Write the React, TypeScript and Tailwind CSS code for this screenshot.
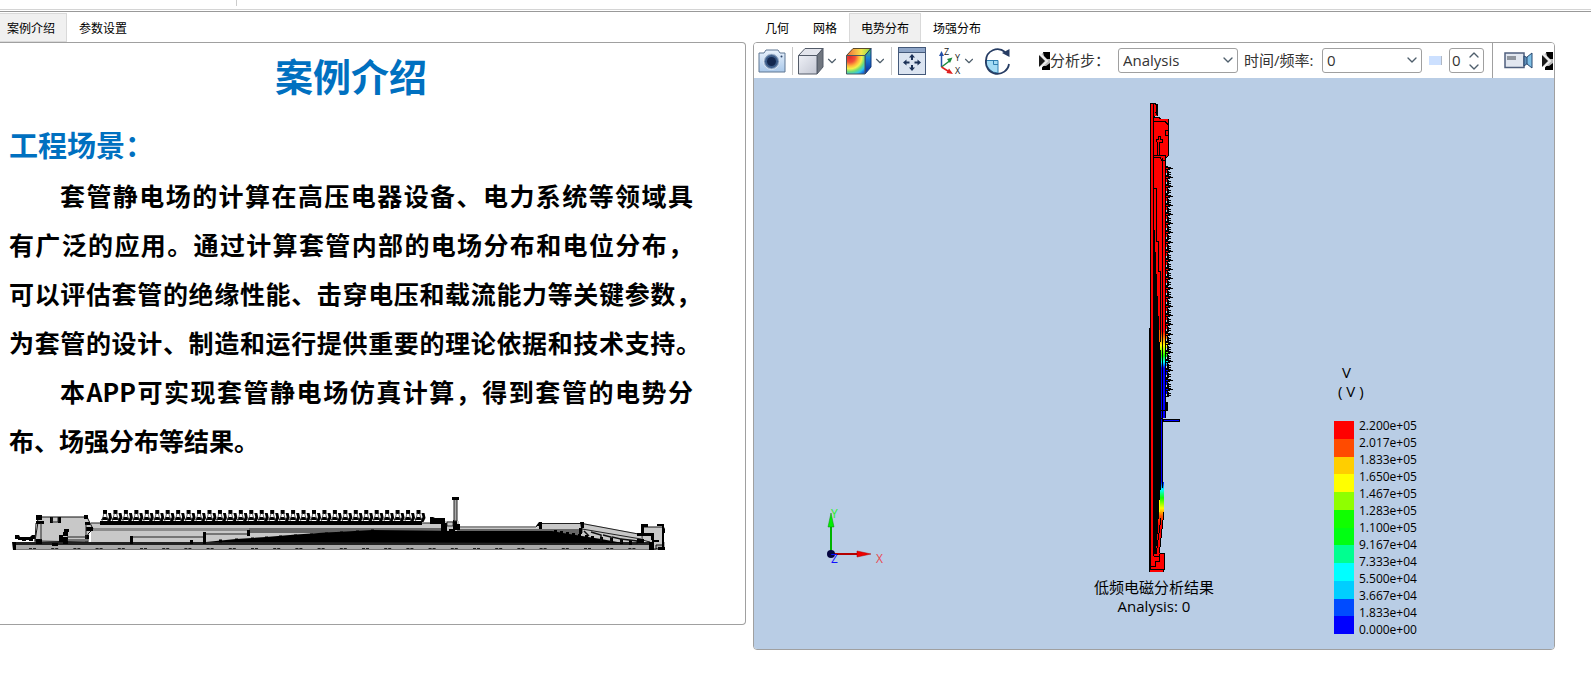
import { useState } from 'react'
import { ChevronDown, ChevronUp } from 'lucide-react'

const leftTabs = ['案例介绍', '参数设置']
const rightTabs = ['几何', '网格', '电势分布', '场强分布']

const legend = [
  { value: '2.200e+05', color: '#ff0000' },
  { value: '2.017e+05', color: '#ff4b00' },
  { value: '1.833e+05', color: '#ffce00' },
  { value: '1.650e+05', color: '#ffff00' },
  { value: '1.467e+05', color: '#8fff00' },
  { value: '1.283e+05', color: '#10ff00' },
  { value: '1.100e+05', color: '#00ff12' },
  { value: '9.167e+04', color: '#00ff90' },
  { value: '7.333e+04', color: '#00ffff' },
  { value: '5.500e+04', color: '#00ceff' },
  { value: '3.667e+04', color: '#004bff' },
  { value: '1.833e+04', color: '#0000ff' },
  { value: '0.000e+00', color: null },
]

function Tabs({ items, active, onChange }: { items: string[], active: string, onChange: (t: string) => void }) {
  return (
    <div role="tablist" className="flex h-[29px]">
      {items.map(item => (
        <button
          key={item}
          role="tab"
          aria-selected={item === active}
          onClick={() => onChange(item)}
          className={`border px-[11px] pt-0.5 text-xs whitespace-nowrap ${item === active ? 'bg-[#f0f0f0] border-[#d9d9d9]' : 'border-transparent'}`}
        >
          {item}
        </button>
      ))}
    </div>
  )
}

function CameraIcon() {
  return (
    <svg width="28" height="26" viewBox="0 0 28 26">
      <defs>
        <linearGradient id="cam" x1="0" y1="0" x2="0" y2="1">
          <stop offset="0" stopColor="#e9f2fc" />
          <stop offset="1" stopColor="#a9c8ea" />
        </linearGradient>
      </defs>
      <path d="M1 5h5l2-3h12l2 3h5v19H1z" fill="url(#cam)" stroke="#5f7693" />
      <circle cx="13.5" cy="13.5" r="8" fill="#7f98b8" stroke="#dfe9f5" />
      <circle cx="13.5" cy="13.5" r="6.5" fill="#3b5b88" />
      <circle cx="13.5" cy="13.5" r="4.5" fill="#14284f" />
      <circle cx="23.5" cy="8.5" r="1" fill="#2b4265" />
    </svg>
  )
}

function CubeIcon() {
  return (
    <svg width="28" height="28" viewBox="0 0 28 28">
      <defs>
        <linearGradient id="cube" x1="0" y1="0" x2="1" y2="1">
          <stop offset="0" stopColor="#eef0f6" />
          <stop offset="1" stopColor="#c3c7d3" />
        </linearGradient>
      </defs>
      <path d="M1.500 8.500L8 1.500H26L20 8.500z" fill="#e3e5ec" stroke="#535b68" />
      <path d="M20 8.500L26 1.500V20L20 27z" fill="#70767f" stroke="#535b68" />
      <path d="M1.500 8.500H20V27H1.500z" fill="url(#cube)" stroke="#535b68" />
    </svg>
  )
}

function ContourCubeIcon() {
  return (
    <svg width="28" height="28" viewBox="0 0 28 28">
      <defs>
        <radialGradient id="contour" gradientUnits="userSpaceOnUse" cx="5" cy="10" r="21">
          <stop offset="0" stopColor="#e02a2a" />
          <stop offset="0.25" stopColor="#f0503a" />
          <stop offset="0.42" stopColor="#ffb43a" />
          <stop offset="0.56" stopColor="#f4f04a" />
          <stop offset="0.7" stopColor="#6fdc78" />
          <stop offset="0.84" stopColor="#2fc4ee" />
          <stop offset="1" stopColor="#1258d8" />
        </radialGradient>
        <linearGradient id="contourTop" x1="0" y1="0" x2="1" y2="0">
          <stop offset="0" stopColor="#f0653a" />
          <stop offset="0.6" stopColor="#f5e64a" />
          <stop offset="1" stopColor="#7fd84a" />
        </linearGradient>
        <linearGradient id="contourSide" x1="0" y1="0" x2="0" y2="1">
          <stop offset="0" stopColor="#5fc840" />
          <stop offset="0.35" stopColor="#1a86d8" />
          <stop offset="1" stopColor="#0a1f9a" />
        </linearGradient>
      </defs>
      <path d="M1.500 8.500L8 1.500H26L20 8.500z" fill="url(#contourTop)" stroke="#5a4a2c" />
      <path d="M20 8.500L26 1.500V20L20 27z" fill="url(#contourSide)" stroke="#123a7a" />
      <path d="M1.500 8.500H20V27H1.500z" fill="url(#contour)" stroke="#4a5a5c" />
    </svg>
  )
}

function FitIcon() {
  return (
    <svg width="28" height="28" viewBox="0 0 28 28">
      <rect x="0.500" y="0.500" width="27" height="27" fill="#dbe4f1" stroke="#44597a" />
      <path d="M1 1h26v4H1z" fill="#8fa6c8" />
      <path d="M1 5.500h26" stroke="#44597a" />
      <g fill="#1c3157">
        <path d="M14 7l-3 3.500h6zM14 24l-3-3.500h6zM5 15.500l3.500-3v6zM23 15.500l-3.500-3v6z" />
        <path d="M13 10h2v3h-2zM13 18h2v3h-2zM8 14.500h3.500v2H8zM16.500 14.500H20v2h-3.500z" />
      </g>
    </svg>
  )
}

function AxesIcon() {
  return (
    <svg width="24" height="30" viewBox="0 0 24 30" className="overflow-visible" fontFamily="Open Sans, sans-serif" fontSize="9" fill="#222">
      <path d="M3.500 21V9" stroke="#2450a8" strokeWidth="1.500" />
      <path d="M1 10l2.500-5L6 10z" fill="#2450a8" />
      <path d="M3.500 21l8-6" stroke="#1d8a3c" strokeWidth="1.500" />
      <path d="M9 13l5.500-1.500L12 17z" fill="#1d8a3c" />
      <path d="M3.500 21l8 5" stroke="#e02020" strokeWidth="1.500" />
      <path d="M11 22.500l4 5.500-6.500-1z" fill="#e02020" />
      <text x="6" y="9">Z</text>
      <text x="17" y="15">Y</text>
      <text x="17" y="28">X</text>
    </svg>
  )
}

function RotateIcon() {
  return (
    <svg width="28" height="28" viewBox="0 0 28 28" fill="none">
      <path d="M2 13.500H14V26A12 12 0 0 1 2 13.500z" fill="#a4dcf5" stroke="#2f7fb0" />
      <path d="M9.500 13.500v4H14" stroke="#2f7fb0" />
      <path d="M21 5A11.500 11.500 0 0 0 2 13.500A11.500 11.500 0 0 0 25 17" stroke="#263c63" strokeWidth="1.800" />
      <path d="M18 6l7.500-4v8z" fill="#263c63" />
    </svg>
  )
}

function MoreIcon() {
  return (
    <svg width="11" height="18" viewBox="0 0 11 18" className="shrink-0">
      <rect width="11" height="18" fill="#bbb" />
      <path d="M0 0h5L0 4z" fill="#fff" />
      <path d="M0 3l6 6-6 6z" fill="#1a1a1a" />
      <path d="M4 0h7v7H8L5 4zM11 11v7H3v-4h4z" fill="#000" />
      <path d="M1 2l7 7-7 7" fill="none" stroke="#eee" strokeWidth="2" />
      <path d="M0 15l3-1v4H0z" fill="#fff" />
    </svg>
  )
}

function VideoIcon() {
  return (
    <svg width="30" height="17" viewBox="0 0 30 17">
      <rect x="1" y="1" width="19" height="14.500" fill="#e2e7f0" stroke="#4f5f7d" strokeWidth="1.500" />
      <rect x="3" y="4" width="9" height="4" fill="#8f959e" />
      <path d="M20 4l4 2v5l-4 3z" fill="#5f8fb8" stroke="#27466e" />
      <path d="M23 5l5-4v15l-5-4z" fill="#7fc0e6" stroke="#27466e" />
    </svg>
  )
}

function Divider() {
  return <span className="h-7 w-px shrink-0 bg-[#c8c8c8]" />
}

// cross-section of the bushing, drawn lying on its side
function BushingSketch() {
  const teeth = Array.from({ length: 31 }, (_, i) => 104 + i * 10.45)
  const dashes = Array.from({ length: 29 }, (_, i) => 28 + i * 22.2)
  return (
    <svg width="660" height="56" viewBox="8 496 660 56" className="max-w-full">
      <path d="M90 524H440V522H458V529H535L539 524H581L640 535V544H90z" fill="#c8c8c8" />
      <path d="M90 529H440V534H248V532H90z" fill="#8c8c8c" />
      <path d="M248 529H440V534H248z" fill="#666" />
      <path d="M456 530H580V537H456z" fill="#686868" />
      <path d="M90 524H440M458 528H535L539 524M539 524.500H581L640 535.500M581 530L640 540M581 524v10" fill="none" stroke="#222" />
      <path d="M12 543H664V551H12z" fill="#aaa" />
      <path d="M12 544.500H650" stroke="#222" strokeWidth="3" />
      <path d="M12 550.500H664" stroke="#777" />
      {dashes.map(x => <path key={x} d={`M${x} 549.500h3m1 0h3`} stroke="#222" />)}
      <path d="M11 543h4v8h-3z" />
      <path d="M14 536h4l1 2h10l2-2h3v4h-2v2h-4v-1h-3v1h-4v-1h-4v-1h-3z" />
      <path d="M34 542L37 523L36 518L86 518L89 524L92 530L87 535V543z" fill="#c8c8c8" stroke="#111" />
      <path d="M35 516h6v5h-6zM49 518h3v6h-3zM57 518h3v6h-3zM83 516h4v4h-4zM35 522h8v3h-8zM35 540h6v5h-6zM58 536h4v7h-4zM63 530h5v3h-5zM62 533h5v4h-5zM62 538h5v7h-5zM84 523h5v3h-5zM85 528h7v4h-7zM84 536h4v4h-4zM51 544h6v3h-6z" />
      <path d="M40 524v17M35 524l-1 19M66 538h18M66 541h18M85 525v18M51 518v5h6v-5" fill="none" stroke="#222" />
      <path d="M131 541v-3H203V535H248V533" fill="none" stroke="#222" />
      <path d="M129 537h3v8h-3zM202 533h3v12h-3zM246 531h3v6h-3zM189 541h3v4h-3z" />
      <path d="M205 543L235 540L265 538L295 535.500L325 533.500L345 532.500L371 531L456 532H551L562 534L581 537L600 540L622 544z" />
      {[218, 234, 250, 264, 278, 293, 309, 324, 339, 355, 370].map((x, i) => (
        <rect key={x} x={x} y={540.500 - i * 1} width="3" height="3" />
      ))}
      {[553, 559, 565, 571, 577, 584, 590, 599, 609, 619, 628].map((x, i) => (
        <rect key={x} x={x} y={531 + i} width="3" height="5" />
      ))}
      <path d="M588 537l-5-5M590 533l10 3v6M602 536l8 2v5M611 538l9 2v4M620 540l16 2v3" fill="none" stroke="#111" strokeWidth="1.500" />
      {/* sheds */}
      <path d="M99 522H421V526H99z" />
      {teeth.map(x => (
        <g key={x}>
          <path d={`M${x - 2} 511h4v4h-4zM${x - 4} 521h7v-2l-2-1h-3zM${x + 3} 514h3l1 5-2 4h-3l2-5z`} />
          <path d={`M${x - 1} 514l-2 8M${x + 1} 514l2 8`} fill="none" stroke="#333" strokeWidth="0.800" />
        </g>
      ))}
      {/* flange */}
      <path d="M429 518h3l2 1h10v6h-15zM440 524h6v9h-6zM452 521h4v4h3v6h-5v3h-6v-4h4z" />
      <path d="M446 523h6v4h-6z" fill="#c8c8c8" stroke="#111" strokeWidth="0.800" />
      <path d="M453 500h3v22h-3z" fill="#aaa" stroke="#222" />
      <path d="M451 498h7v3h-7z" />
      <path d="M535 527l3-4h3v7h-3v-3zM579 523h4v6h-2v6h-3v-6h2z" />
      <path d="M641 528H662V546H655V550H650L649 543L641 541z" fill="#c8c8c8" stroke="#111" />
      <path d="M640 525h7v3h-4v8h-3zM656 525h7v3l1 2v4h-3v-7h-5zM636 534h17v3h-17zM636 540h7v4h-7zM650 536h3v5h-3zM648 543h5v8h-5zM658 543v-2h-7v2zM657 548h7v3h-7zM661 530h2v19h-2z" />
    </svg>
  )
}

// potential distribution on the upright bushing
function PotentialPlot() {
  const sheds = Array.from({ length: 25 }, (_, i) => 168 + i * 9.200)
  return (
    <svg width="64" height="470" viewBox="1122 102 64 470" shapeRendering="crispEdges" className="shrink-0">
      <defs>
        <linearGradient id="potential" gradientUnits="userSpaceOnUse" x1="0" y1="158" x2="0" y2="570">
          <stop offset="0" stopColor="#ff0000" />
          <stop offset="0.420" stopColor="#ff0000" />
          <stop offset="0.435" stopColor="#ff7000" />
          <stop offset="0.455" stopColor="#ffff00" />
          <stop offset="0.480" stopColor="#10ff00" />
          <stop offset="0.495" stopColor="#00ffff" />
          <stop offset="0.510" stopColor="#0000ff" />
          <stop offset="0.785" stopColor="#0000ff" />
          <stop offset="0.805" stopColor="#00ffff" />
          <stop offset="0.825" stopColor="#10ff00" />
          <stop offset="0.850" stopColor="#ffff00" />
          <stop offset="0.870" stopColor="#ff5000" />
          <stop offset="0.890" stopColor="#ff0000" />
          <stop offset="1" stopColor="#ff0000" />
        </linearGradient>
      </defs>
      {sheds.map(y => (
        <g key={y}>
          <path d={`M1165 ${y - 2}h3v7h-3z`} fill="url(#potential)" />
          <path d={`M1166 ${y - 2}h2v1h3v1h2v1h-3v1h-2v1h1v1h2v1h-2v1h2v1h-2v1h-3v-1h1v-2h-2v-1h2v-2h-2v-1h1z`} />
          <path d={`M1166 ${y}h2v1h-2zM1166 ${y + 4}h1v1h-1z`} fill="url(#potential)" />
        </g>
      ))}
      <path d="M1150.500 103.500h3l4 1v11h-3v2h5l1 2h8v36l-3 3v259h-3v67h1v31l-5 45h5v15h-14z" fill="url(#potential)" stroke="#000" />
      <path d="M1151 104h3v12h3v-11M1155 119h13v36h-3v3h-10z" fill="#f00" />
      <path d="M1153.500 104v452M1154 121.500h11l3 3M1157 105v10M1168 130h-3v5h3M1154 155.500h11l1 3M1156 142v-3h2v-3h2v3h2v3h-3v14m-2 0v-14M1154 157.500h6l2 3h3" fill="none" stroke="#000" />
      <path d="M1156 105h2v10h-2v-2h-1v-1h1z" />
      <path d="M1162.500 158V488M1165.500 158v255" fill="none" stroke="#000" />
      <path d="M1154 188.500h2v53h2v30h2v70" fill="none" stroke="#000" />
      <path d="M1153 230h2v22h1v22h1v22h1v20h1v20h1v14h1v140h-1v15h-1v14h-1v15h-1v12h-1v24h-2z" />
      <path d="M1151 104h2v465h-2z" fill="#f00" />
      <path d="M1161 338h1v150h-1zM1163 338h2v80h-2zM1163 482h1v30h-1z" fill="url(#potential)" />
      <path d="M1161 410h5v1h-5zM1161 418h2v1h-2zM1166 402h2v9h-2zM1162 419h3v3h-3z" />
      <path d="M1163 419h17v3h-17z" />
      <path d="M1164 420h15v1h-15z" fill="#00f" />
      <path d="M1159 330h1v12h-1z" fill="#f60" />
      <path d="M1159 500h1v12h-1z" fill="#ff0" />
      <path d="M1158.500 508l-3 46M1161 518l-5 37" fill="none" stroke="#000" />
      <path d="M1154 554h5v-1h5v16h-13v-12h3z" fill="#f00" />
      <path d="M1151 566.500h4v-5h4v-8M1154 556h5M1150.500 103v466.500h14v-16h-5" fill="none" stroke="#000" />
    </svg>
  )
}

function Triad() {
  return (
    <svg width="64" height="62" viewBox="824 504 64 62" className="absolute bottom-[83px] left-[70px] overflow-visible" fontFamily="Open Sans, sans-serif" fontSize="12">
      <path d="M831 554v-28" stroke="#00b400" strokeWidth="2" />
      <path d="M831 513l-3 14h6z" fill="#00f000" stroke="#0a8a0a" strokeWidth="0.500" />
      <path d="M831 554h28" stroke="#b40000" strokeWidth="2" />
      <path d="M871 554l-14-3v6z" fill="#f00000" stroke="#a00" strokeWidth="0.500" />
      <circle cx="831" cy="554" r="4" fill="#050540" />
      <text x="831" y="518" fill="#2cf02c">Y</text>
      <text x="876" y="563" fill="#e84850">X</text>
      <text x="831" y="563" fill="#1010ff">Z</text>
    </svg>
  )
}

function Toolbar() {
  const [frame, setFrame] = useState('0')
  return (
    <div className="flex h-[35px] items-center overflow-hidden bg-white pl-1 text-[15px] text-[#333]">
      <button aria-label="截图"><CameraIcon /></button>
      <span className="ml-1.5 flex"><Divider /></span>
      <button aria-label="显示模式" className="ml-1 flex items-center">
        <CubeIcon />
        <ChevronDown className="size-3.5 shrink-0 text-[#4f5f6c]" />
      </button>
      <button aria-label="云图" className="ml-1.5 flex items-center">
        <ContourCubeIcon />
        <ChevronDown className="size-3.5 shrink-0 text-[#4f5f6c]" />
      </button>
      <span className="ml-1 flex"><Divider /></span>
      <button aria-label="适应窗口" className="ml-1.5"><FitIcon /></button>
      <button aria-label="视图方向" className="ml-3 flex items-center">
        <AxesIcon />
        <ChevronDown className="size-3.5 shrink-0 text-[#4f5f6c]" />
      </button>
      <button aria-label="旋转" className="ml-2"><RotateIcon /></button>
      <span className="ml-[27px]"><MoreIcon /></span>
      <label htmlFor="step" className="w-[68px] shrink-0 whitespace-nowrap">分析步：</label>
      <div className="relative shrink-0">
        <select id="step" className="h-[25px] w-[120px] appearance-none rounded-[3px] border border-[#a0a0a0] bg-white pl-1">
          <option>Analysis</option>
        </select>
        <ChevronDown className="pointer-events-none absolute top-1 right-0.5 size-4 text-[#4f5f6c]" />
      </div>
      <label htmlFor="time" className="ml-1.5 w-[78px] shrink-0 whitespace-nowrap">时间/频率:</label>
      <div className="relative shrink-0">
        <select id="time" className="h-[25px] w-[100px] appearance-none rounded-[3px] border border-[#a0a0a0] bg-white pl-1">
          <option>0</option>
        </select>
        <ChevronDown className="pointer-events-none absolute top-1 right-0.5 size-4 text-[#4f5f6c]" />
      </div>
      <span className="ml-[7px] h-[9px] w-[13px] shrink-0 border-r border-[#b0b8c4] bg-[#cce0ff]" />
      <div className="ml-[7px] flex h-[25px] w-[35px] shrink-0 items-center rounded-[3px] border border-[#a0a0a0]">
        <input aria-label="帧" value={frame} onChange={e => setFrame(e.target.value)} className="w-4 pl-0.5 outline-none" />
        <span className="flex flex-col text-[#4f5f6c]">
          <button aria-label="增加" onClick={() => setFrame(f => String(Number(f) + 1))} className="-mb-1"><ChevronUp className="size-4" /></button>
          <button aria-label="减少" onClick={() => setFrame(f => String(Math.max(0, Number(f) - 1)))}><ChevronDown className="size-4" /></button>
        </span>
      </div>
      <span className="ml-2 h-full w-px shrink-0 bg-[#a0a0a0]" />
      <button aria-label="录制" className="ml-[11px] shrink-0"><VideoIcon /></button>
      <span className="ml-2"><MoreIcon /></span>
    </div>
  )
}

export default function App() {
  const [leftTab, setLeftTab] = useState('案例介绍')
  const [rightTab, setRightTab] = useState('电势分布')

  return (
    <div className="min-h-screen overflow-hidden bg-white font-['Open_Sans','Noto_Sans_CJK_SC',sans-serif] text-black">
      <div className="flex h-[9px]">
        <span className="h-1.5 w-[237px] border-r border-[#ccc]" />
      </div>
      <div className="h-[3px] border-t border-b border-t-[#d4d4d4] border-b-[#999]" />

      <main className="mt-px flex items-start gap-[7px] pr-9">
        <section className="min-w-0 flex-[746]">
          <div className="-ml-[5px]">
            <Tabs items={leftTabs} active={leftTab} onChange={setLeftTab} />
          </div>
          <div className="rounded-r-sm border border-l-0 border-[#a0a0a0] pt-[7px] pb-[73px] pl-[9px]">
            <article className="max-w-[684px] font-['Noto_Sans_CJK_SC',sans-serif] font-bold">
              <h1 className="text-center text-[38px] leading-[50px] text-[#0070c0]">案例介绍</h1>
              <h2 className="mt-[18px] mb-px text-[29px] leading-[52px] text-[#0070c0]">工程场景：</h2>
              <p className="indent-[51px] text-[25px] leading-[49px] whitespace-nowrap [text-align-last:justify]">
                套管静电场的计算在高压电器设备、电力系统等领域具<br />
                有广泛的应用。通过计算套管内部的电场分布和电位分布，
                {/* full lines run on by half a glyph for the closing punctuation */}
                <span className="-mr-2 block indent-0">
                  可以评估套管的绝缘性能、击穿电压和载流能力等关键参数，<br />
                  为套管的设计、制造和运行提供重要的理论依据和技术支持。
                </span>
              </p>
              <p className="indent-[51px] text-[25px] leading-[49px]">
                <span className="block whitespace-nowrap [text-align-last:justify]">本APP可实现套管静电场仿真计算，得到套管的电势分</span>
                <span className="block indent-0">布、场强分布等结果。</span>
              </p>
            </article>
            <div className="mt-[30px]">
              <BushingSketch />
            </div>
          </div>
        </section>

        <section className="min-w-0 flex-[802]">
          <Tabs items={rightTabs} active={rightTab} onChange={setRightTab} />
          <div className="overflow-hidden rounded-sm border border-[#a0a0a0]">
            <Toolbar />
            <div className="relative flex flex-col items-center bg-[#b9cde5] pt-6 pb-[33px]">
              <PotentialPlot />
              <p className="mt-1.5 text-[15px] leading-[19px]">低频电磁分析结果</p>
              <p className="text-[15px] leading-[19px]">Analysis: 0</p>

              <Triad />

              <div className="absolute right-[134px] bottom-[11px] w-[86px]">
                <p className="pl-2 text-[15px] leading-[19px]">V</p>
                <p className="pl-1 text-[15px] leading-[19px]">( V )</p>
                <div className="mt-4 flex gap-[5px]">
                  <div className="my-1 flex w-5 flex-col">
                    {legend.filter(l => l.color).map(l => (
                      <span key={l.value} className="flex-1" style={{ backgroundColor: l.color! }} />
                    ))}
                  </div>
                  <ul className="text-xs leading-[17px]">
                    {legend.map(l => <li key={l.value}>{l.value}</li>)}
                  </ul>
                </div>
              </div>
            </div>
          </div>
        </section>
      </main>
    </div>
  )
}
